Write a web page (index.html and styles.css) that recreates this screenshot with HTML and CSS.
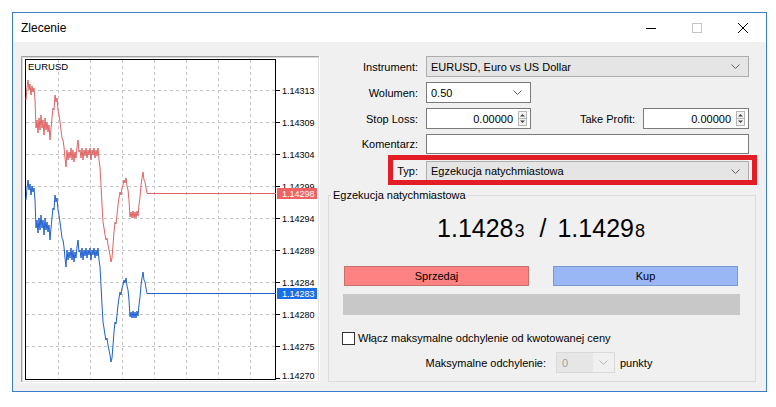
FILE: index.html
```html
<!DOCTYPE html>
<html lang="pl">
<head>
<meta charset="utf-8">
<title>Zlecenie</title>
<link rel="stylesheet" href="styles.css">
</head>
<body>
<div class="window">
  <div class="titlebar">
    <span class="title">Zlecenie</span>
    <div class="caption">
      <span class="cap-btn"><svg width="12" height="12" viewBox="0 0 12 12"><line x1="1" y1="6.5" x2="11" y2="6.5" stroke="#000" stroke-width="1"/></svg></span>
      <span class="cap-btn"><svg width="12" height="12" viewBox="0 0 12 12"><rect x="1.5" y="1.5" width="9" height="9" fill="none" stroke="#c4c4c4" stroke-width="1"/></svg></span>
      <span class="cap-btn"><svg width="12" height="12" viewBox="0 0 12 12"><path d="M1 1 L11 11 M11 1 L1 11" stroke="#000" stroke-width="1" fill="none"/></svg></span>
    </div>
  </div>
  <div class="client">
    <svg class="chart" width="299" height="327" viewBox="21 56 299 327">
      <defs>
        <clipPath id="aboveTag"><rect x="276" y="56" width="44" height="132"/></clipPath>
      </defs>
      <rect x="21" y="56" width="299" height="327" fill="#fff"/>
      <path d="M21.5 382 V56.5 H319" stroke="#a0a0a0" fill="none"/>
      <path d="M22.5 381 V57.5 H318" stroke="#d8d8d8" fill="none"/>
      <path d="M318.5 57 V381.5 H22" stroke="#e3e3e3" fill="none"/>
      <g stroke="#c4c4c4" stroke-dasharray="3 3" fill="none">
        <path d="M58.5 60 V379 M90.5 60 V379 M122.5 60 V379 M154.5 60 V379 M186.5 60 V379 M218.5 60 V379 M250.5 60 V379"/>
        <path d="M26 90.5 H275 M26 122.5 H275 M26 154.5 H275 M26 186.5 H275 M26 218.5 H275 M26 250.5 H275 M26 282.5 H275 M26 314.5 H275 M26 346.5 H275"/>
      </g>
      <rect x="25.5" y="59.5" width="250" height="320" fill="none" stroke="#000"/>
      <g stroke="#000">
        <path d="M276 90.5 H280 M276 122.5 H280 M276 154.5 H280 M276 186.5 H280 M276 218.5 H280 M276 250.5 H280 M276 282.5 H280 M276 314.5 H280 M276 346.5 H280 M276 378.5 H280"/>
      </g>
      <text x="28" y="70" class="sym">EURUSD</text>
      <g class="axis">
        <text x="282" y="94">1.14313</text>
        <text x="282" y="125.5">1.14309</text>
        <text x="282" y="157.5">1.14304</text>
        <text x="282" y="189.5" clip-path="url(#aboveTag)">1.14299</text>
        <text x="282" y="221.5">1.14294</text>
        <text x="282" y="253.5">1.14289</text>
        <text x="282" y="285.5">1.14284</text>
        <text x="282" y="317.5">1.14280</text>
        <text x="282" y="349.5">1.14275</text>
        <text x="282" y="379">1.14270</text>
      </g>
      <polyline fill="none" stroke="#e06464" stroke-width="1" points="26,100 27,88 28,80 29,90 30,84 31,95 32,86 33,92 34,88 35,100 36,128 37,120 38,133 39,118 40,130 41,115 42,128 43,120 44,135 45,118 46,130 47,122 48,132 49,125 50,140 51,128 52,118 53,108 54,110 55,95 56,102 57,98 58,110 59,115 60,122 61,130 62,138 63,140 64,147 65,158 66,167 67,150 68,160 69,152 70,158 71,148 72,160 73,150 74,162 75,152 76,158 77,147 78,140 79,152 80,150 81,158 82,148 83,160 84,150 85,156 86,148 87,158 88,150 89,155 90,148 91,160 92,150 93,155 94,148 95,158 96,150 97,156 98,148 99,160 100,167 101,185 102,205 103,222 104,228 105,235 106,240 107,238 108,245 109,250 110,255 111,262 112,258 113,245 114,232 115,222 116,224 117,215 118,205 119,198 120,192 121,195 122,188 123,185 124,180 125,183 126,178 127,186 128,190 129,200 130,217 131,212 132,218 133,211 134,218 135,212 136,218 137,211 138,216 139,205 140,197 141,185 142,178 143,172 144,180 145,182 146,188 147,193.5 276,193.5"/>
      <polyline fill="none" stroke="#1f5fd0" stroke-width="1" points="26,200 27,188 28,180 29,190 30,184 31,195 32,186 33,192 34,188 35,200 36,228 37,220 38,233 39,218 40,230 41,215 42,228 43,220 44,235 45,218 46,230 47,222 48,232 49,225 50,240 51,228 52,218 53,208 54,210 55,195 56,202 57,198 58,210 59,215 60,222 61,230 62,238 63,240 64,247 65,258 66,267 67,250 68,260 69,252 70,258 71,248 72,260 73,250 74,262 75,252 76,258 77,247 78,240 79,252 80,250 81,258 82,248 83,260 84,250 85,256 86,248 87,258 88,250 89,255 90,248 91,260 92,250 93,255 94,248 95,258 96,250 97,256 98,248 99,260 100,267 101,285 102,305 103,322 104,328 105,335 106,340 107,338 108,345 109,350 110,355 111,362 112,358 113,345 114,332 115,322 116,324 117,315 118,305 119,298 120,292 121,295 122,288 123,285 124,280 125,283 126,278 127,286 128,290 129,300 130,317 131,312 132,318 133,311 134,318 135,312 136,318 137,311 138,316 139,305 140,297 141,285 142,278 143,272 144,280 145,282 146,288 147,293.5 276,293.5"/>
      <rect x="277" y="188" width="40" height="11" fill="#f06262"/>
      <text x="282" y="197" class="tag">1.14298</text>
      <rect x="277" y="288" width="40" height="11" fill="#1a6fe6"/>
      <text x="282" y="297" class="tag">1.14283</text>
    </svg>

    <div class="form">
      <div class="row r-instr">
        <span class="lbl">Instrument:</span>
        <div class="combo gray wide"><span class="val">EURUSD, Euro vs US Dollar</span><svg class="chev" width="9" height="5" viewBox="0 0 9 5"><polyline points="0.5,0.5 4.5,4.5 8.5,0.5" fill="none" stroke="#606060"/></svg></div>
      </div>
      <div class="row r-vol">
        <span class="lbl">Wolumen:</span>
        <div class="combo white vol"><span class="val">0.50</span><svg class="chev" width="9" height="5" viewBox="0 0 9 5"><polyline points="0.5,0.5 4.5,4.5 8.5,0.5" fill="none" stroke="#606060"/></svg></div>
      </div>
      <div class="row r-sl">
        <span class="lbl">Stop Loss:</span>
        <div class="ctrls">
          <div class="spin"><span class="num">0.00000</span><span class="spinbtn"><svg width="9" height="15" viewBox="0 0 9 15"><rect x="0.5" y="0.5" width="8" height="14" fill="#f4f4f4" stroke="#b5b5b5"/><line x1="0.5" y1="7.5" x2="8.5" y2="7.5" stroke="#b5b5b5"/><path d="M2 5.5 L4.5 3 L7 5.5 Z M2 9.5 L4.5 12 L7 9.5 Z" fill="#444"/></svg></span></div>
          <span class="lbl tp">Take Profit:</span>
          <div class="spin tpspin"><span class="num">0.00000</span><span class="spinbtn"><svg width="9" height="15" viewBox="0 0 9 15"><rect x="0.5" y="0.5" width="8" height="14" fill="#f4f4f4" stroke="#b5b5b5"/><line x1="0.5" y1="7.5" x2="8.5" y2="7.5" stroke="#b5b5b5"/><path d="M2 5.5 L4.5 3 L7 5.5 Z M2 9.5 L4.5 12 L7 9.5 Z" fill="#444"/></svg></span></div>
        </div>
      </div>
      <div class="row r-kom">
        <span class="lbl">Komentarz:</span>
        <div class="edit"></div>
      </div>
      <div class="row r-typ">
        <span class="lbl">Typ:</span>
        <div class="combo gray wide typ"><span class="val">Egzekucja natychmiastowa</span><svg class="chev" width="9" height="5" viewBox="0 0 9 5"><polyline points="0.5,0.5 4.5,4.5 8.5,0.5" fill="none" stroke="#606060"/></svg></div>
        <span class="highlight"></span>
      </div>

      <fieldset class="group">
        <legend>Egzekucja natychmiastowa</legend>
        <div class="price"><span>1.1428<small>3</small></span><span class="slash">/</span><span>1.1429<small>8</small></span></div>
        <div class="btns">
          <span class="btn sell">Sprzedaj</span>
          <span class="btn buy">Kup</span>
        </div>
        <div class="bar"></div>
        <div class="check-row">
          <span class="checkbox"></span>
          <span>Włącz maksymalne odchylenie od kwotowanej ceny</span>
        </div>
        <div class="dev-row">
          <span class="dev-lbl">Maksymalne odchylenie:</span>
          <div class="combo disabled"><span class="dval">0</span><svg class="chev" width="9" height="5" viewBox="0 0 9 5"><polyline points="0.5,0.5 4.5,4.5 8.5,0.5" fill="none" stroke="#b4b4b4"/></svg></div>
          <span class="unit">punkty</span>
        </div>
      </fieldset>
    </div>
  </div>
</div>
</body>
</html>
```

FILE: styles.css
```css
* { box-sizing: border-box; }
html, body {
  margin: 0;
  padding: 0;
  background: #ffffff;
}
body {
  font-family: "Liberation Sans", Arial, sans-serif;
  font-size: 11px;
  color: #000;
}
.window {
  margin: 12px 0 0 12px;
  width: 755px;
  height: 380px;
  border: 1px solid #3a7dc9;
  background: #f0f0f0;
  display: flex;
  flex-direction: column;
}
.titlebar {
  height: 29px;
  background: #ffffff;
  display: flex;
  align-items: center;
  padding-left: 8px;
}
.title {
  font-size: 12px;
  flex: 1;
  padding-top: 1px;
}
.caption {
  display: flex;
  align-items: center;
  height: 100%;
}
.cap-btn {
  width: 46px;
  display: flex;
  justify-content: center;
  align-items: center;
}
.cap-btn svg { display: block; }
.client {
  flex: 1;
  display: flex;
  padding: 14px 0 0 8px;
}
.chart {
  display: block;
  flex: none;
}
.sym {
  font-family: "Liberation Sans", Arial, sans-serif;
  font-size: 9.5px;
  fill: #000;
}
.axis text {
  font-family: "Liberation Sans", Arial, sans-serif;
  font-size: 9px;
  fill: #000;
}
.tag {
  font-family: "Liberation Sans", Arial, sans-serif;
  font-size: 9px;
  fill: #fff;
}
.form {
  margin-left: 8px;
  width: 428px;
  display: flex;
  flex-direction: column;
}
.row {
  display: grid;
  grid-template-columns: 90px 323px;
  column-gap: 8px;
  align-items: center;
}
.lbl {
  text-align: right;
  white-space: nowrap;
}
.r-instr { height: 21px; }
.r-vol { height: 21px; margin-top: 5px; }
.r-sl { height: 21px; margin-top: 5px; }
.r-kom { height: 20px; margin-top: 5px; }
.r-typ { height: 20px; margin-top: 7px; position: relative; }

.combo {
  height: 100%;
  display: flex;
  align-items: center;
  justify-content: space-between;
  padding: 0 8px 0 4px;
}
.combo .chev { display: block; flex: none; }
.combo.gray {
  background: #e5e5e5;
  border: 1px solid #adadad;
}
.combo.white {
  background: #fff;
  border: 1px solid #7a7a7a;
}
.combo.vol { width: 105px; }
.ctrls {
  display: flex;
  align-items: center;
  height: 100%;
}
.spin {
  width: 105px;
  height: 100%;
  background: #fff;
  border: 1px solid #7a7a7a;
  display: flex;
  align-items: center;
  justify-content: flex-end;
  padding-right: 3px;
}
.spin .num { margin-right: 5px; }
.spinbtn svg { display: block; }
.lbl.tp {
  flex: 1;
  margin-right: 8px;
}
.spin.tpspin { width: 106px; }
.edit {
  height: 100%;
  background: #fff;
  border: 1px solid #7a7a7a;
}
.highlight {
  position: absolute;
  left: 60px;
  top: -6px;
  width: 369px;
  height: 30px;
  border: 5px solid #e31d25;
  pointer-events: none;
}
.group {
  margin: 8px 0 0 0;
  padding: 0;
  border: 1px solid #dcdcdc;
  height: 193px;
  min-width: 0;
  display: block;
}
.group legend {
  padding: 0 2px;
  margin-left: 2px;
  line-height: 13px;
}
.price {
  font-size: 25px;
  line-height: 28px;
  margin-top: 12px;
  display: flex;
  justify-content: center;
  padding-right: 2px;
  font-family: "Liberation Sans", Arial, sans-serif;
}
.price small {
  font-size: 18px;
  margin-left: 1px;
}
.slash {
  margin: 0 11px 0 15px;
}
.btns {
  display: flex;
  gap: 24px;
  margin: 21px 0 0 15px;
}
.btn {
  width: 185px;
  height: 20px;
  display: flex;
  align-items: center;
  justify-content: center;
}
.btn.sell {
  background: #ff8282;
  border: 1px solid #c87070;
}
.btn.buy {
  background: #9ab7f5;
  border: 1px solid #7a9ad6;
}
.bar {
  margin: 8px 0 0 14px;
  width: 397px;
  height: 21px;
  background: #c8c8c8;
}
.check-row {
  margin: 15px 0 0 13px;
  height: 16px;
  display: flex;
  align-items: center;
  gap: 3px;
}
.checkbox {
  width: 13px;
  height: 13px;
  background: #fff;
  border: 1px solid #333;
}
.dev-row {
  margin-top: 6px;
  height: 21px;
  display: flex;
  align-items: center;
}
.dev-lbl {
  width: 217px;
  text-align: right;
  margin-right: 10px;
}
.combo.disabled {
  width: 59px;
  background: #f0f0f0;
  border: 1px solid #d9d9d9;
  padding: 0 6px 0 0;
}
.dval {
  color: #a0a0a0;
  background: #e6e6e6;
  height: 100%;
  width: 36px;
  display: flex;
  align-items: center;
  padding-left: 5px;
}
.unit { margin-left: 5px; }
```
